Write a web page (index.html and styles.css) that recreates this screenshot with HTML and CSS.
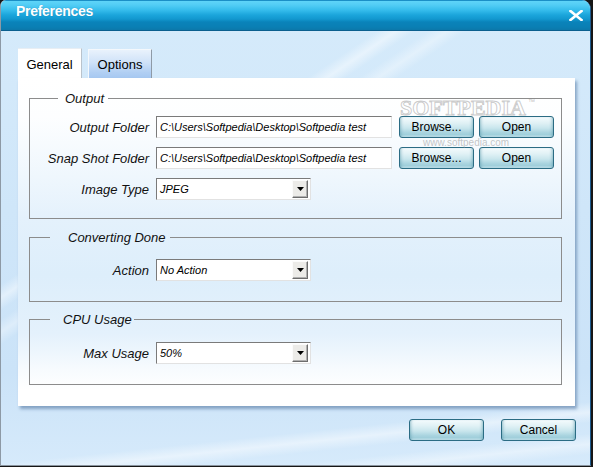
FILE: index.html
```html
<!DOCTYPE html>
<html>
<head>
<meta charset="utf-8">
<title>Preferences</title>
<link rel="stylesheet" href="styles.css">
</head>
<body>
<div class="window">
  <div class="titlebar">
    <span class="title">Preferences</span>
    <svg class="close" width="14" height="11" viewBox="0 0 14 11">
      <path d="M1.5 1 L12.5 10 M12.5 1 L1.5 10" stroke="#ffffff" stroke-width="2.6" stroke-linecap="square"/>
    </svg>
  </div>
  <div class="content">
    <div class="tabs">
      <div class="tab tab-active">General</div>
      <div class="tab tab-inactive">Options</div>
    </div>
    <div class="panel">
      <fieldset class="group group-output">
        <legend class="legend legend-output">Output</legend>
        <div class="row">
          <span class="label">Output Folder</span>
          <div class="field">C:\Users\Softpedia\Desktop\Softpedia test</div>
          <button class="btn btn-browse">Browse...</button>
          <button class="btn btn-open">Open</button>
        </div>
        <div class="row">
          <span class="label">Snap Shot Folder</span>
          <div class="field">C:\Users\Softpedia\Desktop\Softpedia test</div>
          <button class="btn btn-browse">Browse...</button>
          <button class="btn btn-open">Open</button>
        </div>
        <div class="row">
          <span class="label">Image Type</span>
          <div class="select"><span class="select-text">JPEG</span><span class="arrow"><svg width="7" height="4" viewBox="0 0 7 4"><polygon points="0,0 7,0 3.5,4" fill="#000"/></svg></span></div>
        </div>
      </fieldset>
      <fieldset class="group group-done">
        <legend class="legend legend-done">Converting Done</legend>
        <div class="row">
          <span class="label">Action</span>
          <div class="select"><span class="select-text">No Action</span><span class="arrow"><svg width="7" height="4" viewBox="0 0 7 4"><polygon points="0,0 7,0 3.5,4" fill="#000"/></svg></span></div>
        </div>
      </fieldset>
      <fieldset class="group group-cpu">
        <legend class="legend legend-cpu">CPU Usage</legend>
        <div class="row">
          <span class="label">Max Usage</span>
          <div class="select"><span class="select-text">50%</span><span class="arrow"><svg width="7" height="4" viewBox="0 0 7 4"><polygon points="0,0 7,0 3.5,4" fill="#000"/></svg></span></div>
        </div>
      </fieldset>
      <span class="wm-logo">SOFTPEDIA</span>
      <span class="wm-tm">™</span>
      <span class="wm-url">www.softpedia.com</span>
    </div>
    <div class="footer">
      <button class="btn btn-ok">OK</button>
      <button class="btn btn-cancel">Cancel</button>
    </div>
  </div>
</div>
</body>
</html>
```

FILE: styles.css
```css
* { box-sizing: border-box; }

html, body {
  margin: 0;
  padding: 0;
}

body {
  width: 593px;
  height: 467px;
  overflow: hidden;
  background: #161616;
  font-family: "Liberation Sans", Arial, sans-serif;
  color: #000;
}

.window {
  width: 591px;
  height: 466px;
  border-left: 1px solid #8d99a5;
  border-right: 1px solid #1d5b8e;
  border-bottom: 1px solid #8a949e;
  border-radius: 6px 9px 0 0;
  overflow: hidden;
  display: flex;
  flex-direction: column;
  background-color: #d3e9fa;
  background-image:
    linear-gradient(146deg, transparent 33%, rgba(255,255,255,0.45) 34.5%, transparent 36%, transparent 37%, rgba(255,255,255,0.35) 38.5%, transparent 40%),
    linear-gradient(174deg, transparent 88%, rgba(255,255,255,0.45) 90%, transparent 92%, transparent 94%, rgba(255,255,255,0.4) 96%, transparent 98%),
    linear-gradient(to bottom, #d6ebfb 0%, #cfe6f9 45%, #cbe3f8 80%, #d6eafb 100%);
}

.titlebar {
  flex: none;
  height: 31px;
  display: flex;
  justify-content: space-between;
  align-items: flex-start;
  padding: 3px 7px 0 15px;
  border-top: 1px solid #1b8fc6;
  border-bottom: 1px solid #0b5f8e;
  background: linear-gradient(to bottom, #5fd4f8 0px, #52cdf5 4px, #36bdec 9px, #1ba5db 14px, #1298cf 18px, #0a83ba 21px, #0a7fb4 26px, #0c78aa 29px);
}

.title {
  font-size: 14px;
  line-height: 16px;
  font-weight: bold;
  letter-spacing: -0.3px;
  color: #fff;
  text-shadow: 0 0 1px rgba(0, 60, 110, 0.4);
  margin-top: -1px;
}

.close {
  margin-top: 6px;
  display: block;
}

.content {
  flex: 1;
  padding: 17px 15px 0 17px;
  display: flex;
  flex-direction: column;
}

.tabs {
  display: flex;
  align-items: flex-end;
  height: 30px;
}

.tab {
  width: 64px;
  display: flex;
  align-items: center;
  justify-content: center;
  font-size: 13px;
}

.tab-active {
  height: 30px;
  background: #fff;
  border-top: 1px solid #e8eef4;
  border-right: 1px solid #b9c3cc;
  padding-top: 1px;
}

.tab-inactive {
  height: 29px;
  margin-left: 6px;
  background: linear-gradient(to bottom, #e9f2fc 0%, #cfe2f8 45%, #b1cff3 80%, #a6c8f1 100%);
  border-top: 1px solid #f4f8fc;
  border-left: 1px solid #f4f8fc;
  border-right: 1px solid #8e9aa6;
}

.panel {
  position: relative;
  width: 557px;
  height: 328px;
  padding: 13px 13px 0 11px;
  background: linear-gradient(to bottom, #ffffff 0%, #fdfeff 12%, #eff7fd 30%, #e4f1fc 43%, #ddeefb 60%, #e4f1fc 78%, #f7fbfe 89%, #ffffff 95%);
  box-shadow: 2px 3px 3px rgba(40, 80, 130, 0.45);
}

.group {
  margin: 0;
  border: 1px solid #8c8c8c;
  padding: 0;
  width: 533px;
}

.group-output { padding: 10px 0 18px 0; }
.group-done { margin-top: 11px; padding: 14px 0 20px 0; }
.group-cpu { margin-top: 10px; padding: 15px 0 20px 0; }

.legend {
  font-size: 13px;
  line-height: 15px;
  font-style: italic;
  color: #111;
}

.legend-output { margin-left: 28px; padding: 0 4px 0 7px; }
.legend-done { margin-left: 20px; padding: 0 4px 0 18px; }
.legend-cpu { margin-left: 20px; padding: 0 2px 0 13px; }

.row {
  display: flex;
  align-items: center;
  height: 22px;
}

.row + .row { margin-top: 9px; }

.label {
  width: 126px;
  padding-right: 7px;
  text-align: right;
  font-size: 13px;
  font-style: italic;
  color: #111;
  white-space: nowrap;
}

.field {
  width: 236px;
  height: 22px;
  border: 1px solid;
  border-color: #7a7a7a #e2e2e2 #e2e2e2 #7a7a7a;
  background: #fff;
  font-size: 11px;
  font-style: italic;
  line-height: 20px;
  padding-left: 3px;
  white-space: nowrap;
  overflow: hidden;
}

.select {
  width: 155px;
  height: 22px;
  border: 1px solid;
  border-color: #7a7a7a #e2e2e2 #e2e2e2 #7a7a7a;
  background: #fff;
  display: flex;
  align-items: center;
  justify-content: space-between;
  padding: 1px 2px 1px 3px;
}

.select-text {
  font-size: 11px;
  font-style: italic;
}

.arrow {
  width: 16px;
  height: 18px;
  border: 1px solid;
  border-color: #fbfbfb #6d6d6d #6d6d6d #fbfbfb;
  background: #ecebe8;
  display: flex;
  align-items: center;
  justify-content: center;
  box-shadow: inset -1px -1px 0 #b0b0b0;
}

.arrow svg { display: block; }

.btn {
  width: 75px;
  height: 22px;
  padding: 0;
  margin: 0;
  border: 1px solid #2b6c84;
  border-radius: 3px;
  font-family: "Liberation Sans", Arial, sans-serif;
  font-size: 12px;
  color: #000;
  background: linear-gradient(to bottom, #f4fbfd 0%, #e0f1f5 30%, #c9e6ed 55%, #a9d4df 78%, #a0cfdb 88%, #c0e1e9 100%);
  box-shadow: inset 3px 0 3px -2px rgba(70, 140, 160, 0.5), inset -3px 0 3px -2px rgba(70, 140, 160, 0.5);
}

.btn-browse { margin-left: 7px; }
.btn-open { margin-left: 5px; }

.footer {
  display: flex;
  justify-content: flex-end;
  gap: 17px;
  margin-top: 13px;
  margin-right: -1px;
}

.wm-logo {
  position: absolute;
  left: 382px;
  top: 21px;
  font-family: "Liberation Serif", serif;
  font-size: 22px;
  line-height: 18px;
  font-weight: bold;
  color: rgba(255, 255, 255, 0.5);
  -webkit-text-stroke: 1px rgba(140, 140, 140, 0.45);
  pointer-events: none;
}

.wm-tm {
  position: absolute;
  left: 510px;
  top: 20px;
  font-size: 7px;
  line-height: 7px;
  color: rgba(130, 130, 130, 0.5);
  pointer-events: none;
}

.wm-url {
  position: absolute;
  left: 405px;
  top: 61px;
  font-size: 10px;
  line-height: 8px;
  color: rgba(150, 150, 150, 0.55);
  pointer-events: none;
}
```
